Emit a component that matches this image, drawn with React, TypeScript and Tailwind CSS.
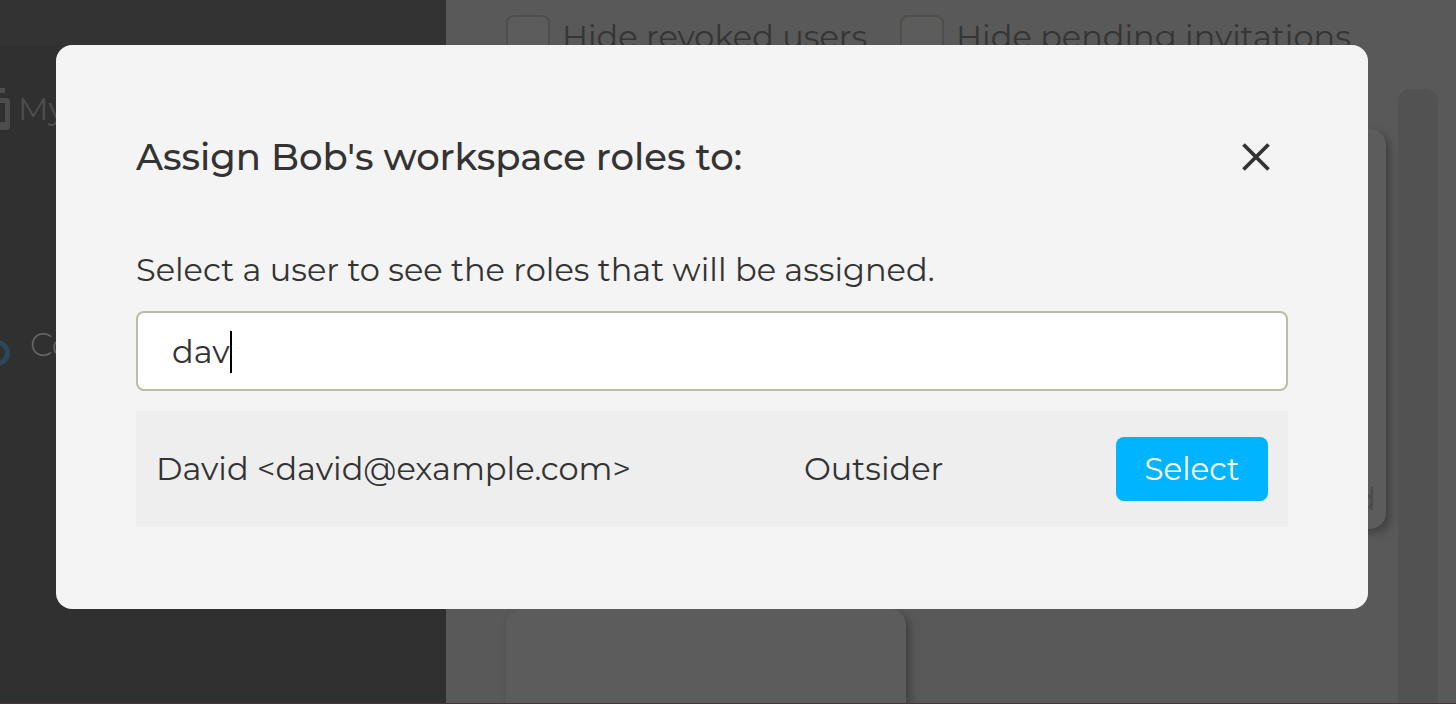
import { useState } from "react";

function Sidebar() {
  return (
    <aside className="flex w-[446px] shrink-0 flex-col bg-[#303030]">
      <div className="h-[45px] shrink-0 bg-[#333333]" />
      <nav className="flex flex-col pt-10 text-[32px] leading-10">
        <a href="#home" className="flex items-center gap-2 text-[#4d4d4d]">
          <svg width="10" height="48" viewBox="0 0 10 48" fill="currentColor" aria-hidden="true">
            <path d="M0 3h5v5H0z" />
            <path d="M0 13h6a4 4 0 0 1 4 4v24a4 4 0 0 1-4 4H0v-8h5V18H0z" />
          </svg>
          <span>My</span>
        </a>
        <a href="#company" className="mt-[188px] flex items-center gap-5 font-light text-[#666666]">
          <svg width="10" height="48" viewBox="0 0 10 48" fill="none" aria-hidden="true">
            <circle cx="-3" cy="32" r="10.5" stroke="#2c4858" strokeWidth="5" />
          </svg>
          <span>Co</span>
        </a>
      </nav>
    </aside>
  );
}

function Filter({ label }: { label: string }) {
  return (
    <label className="flex items-center gap-3 text-[#353535]">
      <input
        type="checkbox"
        className="size-11 appearance-none rounded-lg border-2 border-[#4f4e48] bg-[#5c5c5c]"
      />
      <span className="whitespace-nowrap">{label}</span>
    </label>
  );
}

function Card({ text }: { text?: string }) {
  return (
    <div className="flex h-[400px] items-end justify-end rounded-2xl bg-[#5c5c5c] px-[10px] pb-[10px] text-[#4a4a4a] shadow-[4px_4px_8px_#404040]">
      {text}
    </div>
  );
}

function Workspace() {
  return (
    <main className="flex min-w-0 flex-1 flex-col bg-[#595959] pt-[15px] pr-[18px] pl-[60px] text-[32px] leading-10">
      <div className="flex gap-[33px]">
        <Filter label="Hide revoked users" />
        <Filter label="Hide pending invitations" />
      </div>
      <div className="mt-[30px] flex min-h-0 flex-1 gap-3">
        <div className="grid flex-1 grid-cols-2 content-start gap-20 pt-10">
          <Card />
          <Card text="d" />
          <Card />
        </div>
        <div className="w-10 rounded-t-xl bg-[#525252]" />
      </div>
    </main>
  );
}

function AssignDialog() {
  const [query, setQuery] = useState("dav");
  return (
    <div
      role="dialog"
      aria-modal="true"
      aria-labelledby="dialog-title"
      className="absolute top-[45px] right-[88px] left-14 rounded-2xl bg-[#f4f4f4] px-20 pt-[82px] pb-[82px] text-[32px] leading-10 text-[#333333]"
    >
      <header className="flex items-center justify-between">
        <h1 id="dialog-title" className="text-[37px] leading-[60px] font-medium">
          Assign Bob's workspace roles to:
        </h1>
        <button type="button" aria-label="Close" className="mr-2 flex size-12 items-center justify-center">
          <svg width="28" height="28" viewBox="0 0 28 28" fill="none" stroke="currentColor" strokeWidth="3.8" aria-hidden="true">
            <path d="M1.5 1.5l25 25M26.5 1.5l-25 25" />
          </svg>
        </button>
      </header>
      <label htmlFor="user-search" className="mt-[63px] block">
        Select a user to see the roles that will be assigned.
      </label>
      <div className="relative mt-[21px]">
        <input
          id="user-search"
          type="text"
          value={query}
          onChange={(event) => setQuery(event.target.value)}
          className="block h-20 w-full rounded-lg border-2 border-[#bbbda9] bg-white px-[34px] caret-transparent outline-none"
        />
        <span className="absolute top-5 left-[94px] h-[42px] w-[2px] bg-black" />
      </div>
      <ul className="mt-5">
        <li className="flex h-[116px] items-center bg-[#eeeeee] px-5">
          <span className="flex-[648]">David &lt;david@example.com&gt;</span>
          <span className="flex-[312]">Outsider</span>
          <button type="button" className="h-16 w-[152px] rounded-lg bg-[#00b4ff] text-[31px] text-white">
            Select
          </button>
        </li>
      </ul>
    </div>
  );
}

export default function App() {
  return (
    <div className="relative flex h-screen overflow-hidden border-b border-[#40383c] font-['Montserrat','Inter',sans-serif]">
      <Sidebar />
      <Workspace />
      <AssignDialog />
    </div>
  );
}
